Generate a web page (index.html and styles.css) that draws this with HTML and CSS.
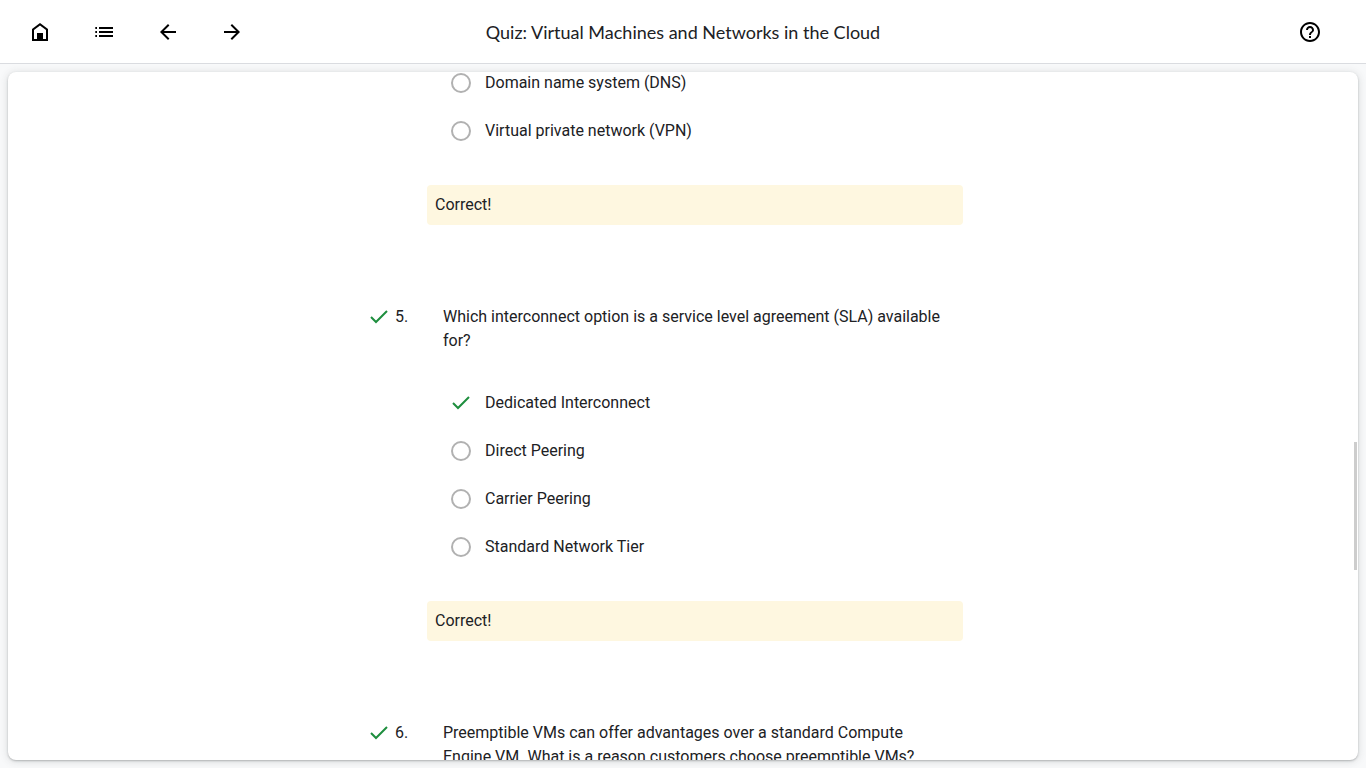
FILE: index.html
```html
<!DOCTYPE html>
<html lang="en">
<head>
<meta charset="utf-8">
<meta name="viewport" content="width=device-width, initial-scale=1">
<title>Quiz: Virtual Machines and Networks in the Cloud</title>
<link rel="stylesheet" href="styles.css">
</head>
<body class="page">
<header class="topbar">
  <nav class="topbar-nav" aria-label="Course">
    <button class="icon-button" type="button" aria-label="Home"><svg class="icon" viewBox="0 0 24 24"><path fill-rule="evenodd" d="M12 3 4 9v12h16V9zM6 19v-9l6-4.500 6 4.500v9z"/><path d="M9 13h6v7H9z"/></svg></button>
    <button class="icon-button" type="button" aria-label="Outline"><svg class="icon" viewBox="0 0 24 24"><path d="M3.300 7H5v2H3.300zM3.300 11H5v2H3.300zM3.300 15H5v2H3.300zM7 7h14v2H7zM7 11h14v2H7zM7 15h14v2H7z"/></svg></button>
    <button class="icon-button" type="button" aria-label="Previous"><svg class="icon" viewBox="0 0 24 24"><path d="M20 11H7.830l5.590-5.590L12 4l-8 8 8 8 1.410-1.410L7.830 13H20z"/></svg></button>
    <button class="icon-button" type="button" aria-label="Next"><svg class="icon" viewBox="0 0 24 24"><path d="m12 4-1.410 1.410L16.170 11H4v2h12.170l-5.580 5.590L12 20l8-8z"/></svg></button>
  </nav>
  <h1 class="topbar-title">Quiz: Virtual Machines and Networks in the Cloud</h1>
  <div class="topbar-end">
    <button class="icon-button" type="button" aria-label="Help"><svg class="icon" viewBox="0 0 24 24"><path d="M11 18h2v-2h-2zm1-16C6.480 2 2 6.480 2 12s4.480 10 10 10 10-4.480 10-10S17.520 2 12 2m0 18c-4.410 0-8-3.590-8-8s3.590-8 8-8 8 3.590 8 8-3.590 8-8 8m0-14c-2.210 0-4 1.790-4 4h2c0-1.100.9-2 2-2s2 .9 2 2c0 2-3 1.750-3 5h2c0-2.250 3-2.500 3-5 0-2.210-1.790-4-4-4"/></svg></button>
  </div>
</header>
<main class="stage">
  <div class="card">
    <div class="quiz">
      <section class="question">
        <div class="options options-scrolled">
          <label class="option"><input class="radio" type="radio" name="q4" disabled>Domain name system (DNS)</label>
          <label class="option"><input class="radio" type="radio" name="q4" disabled>Virtual private network (VPN)</label>
        </div>
        <p class="feedback">Correct!</p>
      </section>
      <section class="question">
        <div class="prompt">
          <svg class="check" viewBox="0 0 20 20" role="img" aria-label="Correct"><path d="m2 10 5 5L18 4"/></svg>
          <span class="number">5.</span>
          <p class="prompt-text">Which interconnect option is a service level agreement (SLA) available for?</p>
        </div>
        <div class="options">
          <label class="option"><input class="radio radio-correct" type="radio" name="q5" checked disabled><svg class="check" viewBox="0 0 20 20" aria-hidden="true"><path d="m2 10 5 5L18 4"/></svg>Dedicated Interconnect</label>
          <label class="option"><input class="radio" type="radio" name="q5" disabled>Direct Peering</label>
          <label class="option"><input class="radio" type="radio" name="q5" disabled>Carrier Peering</label>
          <label class="option"><input class="radio" type="radio" name="q5" disabled>Standard Network Tier</label>
        </div>
        <p class="feedback">Correct!</p>
      </section>
      <section class="question">
        <div class="prompt">
          <svg class="check" viewBox="0 0 20 20" role="img" aria-label="Correct"><path d="m2 10 5 5L18 4"/></svg>
          <span class="number">6.</span>
          <p class="prompt-text">Preemptible VMs can offer advantages over a standard Compute Engine VM. What is a reason customers choose preemptible VMs?</p>
        </div>
      </section>
    </div>
    <div class="scroll-thumb"></div>
  </div>
</main>
</body>
</html>
```
FILE: styles.css
```css
* {
  box-sizing: border-box;
}

.page {
  display: flex;
  flex-direction: column;
  height: 100vh;
  margin: 0;
  background: #f8f9fa;
  color: #202124;
  font: 16px/24px Roboto, "Liberation Sans", sans-serif;
}

.topbar {
  display: grid;
  grid-template-columns: 1fr auto 1fr;
  align-items: center;
  flex: none;
  height: 64px;
  padding: 0 16px;
  border-bottom: 1px solid #dadce0;
  background: #fff;
}

.topbar-nav {
  display: flex;
  gap: 16px;
}

.topbar-title {
  margin: 0;
  font: 400 18px/24px Lato, Roboto, sans-serif;
}

.topbar-end {
  display: flex;
  justify-content: flex-end;
  padding-right: 16px;
}

.icon-button {
  display: flex;
  align-items: center;
  justify-content: center;
  width: 48px;
  height: 48px;
  padding: 0;
  border: 0;
  background: none;
  color: #000;
}

.icon {
  width: 24px;
  height: 24px;
  fill: currentColor;
}

.stage {
  display: flex;
  flex: 1;
  min-height: 0;
  padding: 8px;
}

.card {
  position: relative;
  flex: 1;
  overflow: hidden;
  border-radius: 8px;
  background: #fff;
  box-shadow: 0 1px 2px rgba(60, 64, 67, .3), 0 1px 8px rgba(60, 64, 67, .18);
}

.quiz {
  max-width: 628px;
  margin: 0 auto;
  padding-right: 34px;
}

.question {
  padding-bottom: 80px;
}

.prompt {
  display: flex;
  padding-right: 16px;
}

.check {
  flex: none;
  width: 20px;
  height: 20px;
  margin-top: 2px;
  fill: none;
  stroke: #1e8e3e;
  stroke-width: 2;
}

.number {
  flex: none;
  width: 48px;
  margin-left: 6px;
}

.prompt-text {
  margin: 0;
}

.options {
  padding: 26px 0 0 82px;
}

/* The list rests part-way under the card's top edge. */
.options-scrolled {
  margin-top: -13px;
  padding-top: 0;
}

.option {
  position: relative;
  display: flex;
  align-items: center;
  gap: 14px;
  height: 48px;
}

.option .check {
  margin: 0;
}

.radio {
  appearance: none;
  flex: none;
  width: 20px;
  height: 20px;
  margin: 0;
  border: 2px solid #b1b1b1;
  border-radius: 50%;
}

.radio-correct {
  position: absolute;
  opacity: 0;
}

.feedback {
  margin: 30px 0 0 58px;
  padding: 8px;
  border-radius: 4px;
  background: #fef7e0;
}

.scroll-thumb {
  position: absolute;
  bottom: 190px;
  right: 1px;
  width: 3px;
  height: 128px;
  background: #cdcdcd;
}
```
